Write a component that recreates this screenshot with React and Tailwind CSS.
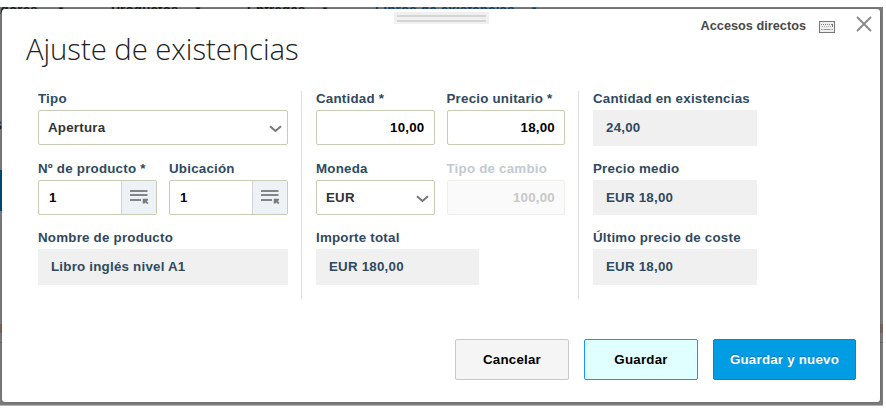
const LABEL = 'block h-[15px] mb-[4px] leading-[16px] whitespace-nowrap';

function Label({ children, muted }) {
  return <span className={`${LABEL} ${muted ? 'text-[#c3cad1]' : 'text-[#2f4a60]'}`}>{children}</span>;
}

function Chevron() {
  return (
    <svg width="13" height="8" viewBox="0 0 13 8" fill="none" stroke="#777" strokeWidth="2" className="mt-[2px]">
      <path d="M1 1.2 L6.5 6 L12 1.2" />
    </svg>
  );
}

function ListIcon() {
  return (
    <svg width="19" height="16" viewBox="0 0 19 16">
      <path d="M0 1h17.5v2H0zM0 5h17.5v2H0zM0 10h11v2H0z" fill="#858585" />
      <path d="M12.7 9.8h5.3v1.4l-1.2 0.8 1.6 2-1.2 1.2-1.6-1.8-1 1.2h-1.9z" fill="#7c7c7c" />
    </svg>
  );
}

function KeyboardIcon() {
  return (
    <svg width="16" height="12" viewBox="0 0 16 12">
      <rect x="0.5" y="0.5" width="15" height="11" fill="#eee" stroke="#777" />
      <path d="M2 3.5h12" stroke="#888" strokeDasharray="1 1" />
      <path d="M3 5.5h10" stroke="#aaa" strokeDasharray="1 1" />
      <path d="M13.5 3v3" stroke="#777" />
      <path d="M2 8.5h1.5M4.5 8.5h7M12.5 8.5h1.5" stroke="#999" />
    </svg>
  );
}

function Select({ label, value, className }) {
  return (
    <div className={`h-[54px] ${className || ''}`}>
      <Label>{label}</Label>
      <div className="h-[35px] border border-[#cbccb6] rounded-[2px] bg-white flex items-center justify-between pl-[9px] pr-[5px] pt-px text-[#333]">
        {value}
        <Chevron />
      </div>
    </div>
  );
}

function Input({ label, value, disabled }) {
  return (
    <div className="w-[118.5px] h-[54px]">
      <Label muted={disabled}>{label}</Label>
      <div className={`h-[35px] border rounded-[2px] flex items-center justify-end pr-[9px] pt-px ${disabled ? 'border-[#efefe9] bg-[#fafafa] text-[#c8c8c8]' : 'border-[#cbccb6] bg-white text-black'}`}>
        {value}
      </div>
    </div>
  );
}

function Lookup({ label, value }) {
  return (
    <div className="w-[119px] h-[54px]">
      <Label>{label}</Label>
      <div className="h-[35px] border border-[#cbccb6] rounded-[2px] bg-white flex items-stretch text-black">
        <span className="flex-1 flex items-center pl-[10px] pt-px">{value}</span>
        <span className="w-[35px] flex items-center justify-center border-l border-[#d0d5d8] bg-[#edf2f6]">
          <ListIcon />
        </span>
      </div>
    </div>
  );
}

function ReadOnly({ label, value, className }) {
  return (
    <div className={`h-[54px] ${className || ''}`}>
      <Label>{label}</Label>
      <div className="h-[35.5px] bg-[#f0f0f0] flex items-center pl-[13px] pt-px text-[#2f4a60]">{value}</div>
    </div>
  );
}

export default function App() {
  return (
    <div className="h-[418px] w-[886px] bg-white pt-[7px] overflow-hidden text-[13.33px] tracking-[0.22px] font-bold font-['Liberation_Sans',Arial,sans-serif]">
      <div className="relative w-[883px] h-[399px] bg-[#7b7b7b] border-b border-[#b5b5b5] pl-[2px] pt-[2px] overflow-hidden">
        {/* page behind the dialog */}
        <div className="absolute left-0 top-[-5px] h-[15px] leading-[15px] text-[#1c1c1c] tracking-[0.2px] whitespace-nowrap">
          <span className="absolute left-[-7px]">adores</span>
          <span className="absolute left-[57px] text-[8px]">▼</span>
          <span className="absolute left-[111px]">Productos</span>
          <span className="absolute left-[194px] text-[8px]">▼</span>
          <span className="absolute left-[247px]">Entradas</span>
          <span className="absolute left-[321px] text-[8px]">▼</span>
          <span className="absolute left-[375px] text-[#064a70]">Libros de existencias</span>
          <span className="absolute left-[530px] text-[8px] text-[#064a70]">▼</span>
        </div>
        <span className="absolute left-[-7px] top-[109px] text-[#222]">S</span>
        <span className="absolute left-0 top-[163px] w-[2px] h-[41px] bg-[#004a76]" />
        <span className="absolute left-0 top-[317px] w-full h-[9px] bg-[#76655c]" />
        <span className="absolute left-0 top-[335px] w-full h-px bg-[#666]" />

        <div className="relative w-[878px] h-[393px] bg-white rounded-[3px] shadow-[0_0_2px_rgba(0,0,0,0.3)]">
          <div className="absolute left-[391.5px] top-[3px] w-[95px] h-[12px] bg-[#f0f0f0] px-[3px] pt-[3px]">
            <div className="h-[2px] bg-[#d5d5d5] mb-[3px]" />
            <div className="h-[2px] bg-[#d5d5d5]" />
          </div>

          <div className="flex justify-between h-[82px]">
            <h1 className="pl-[24px] pt-[20px] text-[29.3px] leading-[40px] font-light text-[#222] tracking-[-0.05px] font-['Open_Sans','Noto_Sans',sans-serif]">
              Ajuste de existencias
            </h1>
            <div className="flex items-start pr-[8px] pt-[9px] text-[#484848]">
              <span className="leading-[16px] mr-[13px] text-[12.7px] tracking-[0.02px]">Accesos directos</span>
              <span className="mt-[3px] mr-[21px]"><KeyboardIcon /></span>
              <svg width="16" height="16" viewBox="0 0 16 16" stroke="#888" strokeWidth="1.8" className="mt-[-2px]">
                <path d="M1 1l14 14M15 1L1 15" />
              </svg>
            </div>
          </div>

          <div className="flex h-[208px] pl-[36px]">
            <div className="w-[264px] flex flex-col gap-[15.5px] border-r border-[#dedede] pr-[13px]">
              <Select label="Tipo" value="Apertura" />
              <div className="flex gap-[12px]">
                <Lookup label="Nº de producto *" value="1" />
                <Lookup label="Ubicación" value="1" />
              </div>
              <ReadOnly label="Nombre de producto" value="Libro inglés nivel A1" />
            </div>
            <div className="w-[277px] flex flex-col gap-[15.5px] border-r border-[#dedede] pl-[14px]">
              <div className="flex gap-[12px]">
                <Input label="Cantidad *" value="10,00" />
                <Input label="Precio unitario *" value="18,00" />
              </div>
              <div className="flex gap-[12px]">
                <Select label="Moneda" value="EUR" className="w-[118.5px]" />
                <Input label="Tipo de cambio" value="100,00" disabled />
              </div>
              <ReadOnly label="Importe total" value="EUR 180,00" className="w-[163px]" />
            </div>
            <div className="flex flex-col gap-[15.5px] pl-[14px]">
              <ReadOnly label="Cantidad en existencias" value="24,00" className="w-[164px]" />
              <ReadOnly label="Precio medio" value="EUR 18,00" className="w-[164px]" />
              <ReadOnly label="Último precio de coste" value="EUR 18,00" className="w-[164px]" />
            </div>
          </div>

          <div className="flex justify-end gap-[15px] pt-[40px] pr-[24px]">
            <button className="w-[114px] h-[41px] border border-[#c8c8c8] rounded-[2px] bg-[#f5f5f5] text-black">Cancelar</button>
            <button className="w-[114px] h-[41px] border border-[#1a93ff] rounded-[2px] bg-[#e0ffff] text-black">Guardar</button>
            <button className="w-[143px] h-[41px] border border-[#0786bf] rounded-[2px] bg-[#009de4] text-white [text-shadow:0_-1px_0_rgba(0,0,0,0.25)]">Guardar y nuevo</button>
          </div>
        </div>
      </div>
    </div>
  );
}
